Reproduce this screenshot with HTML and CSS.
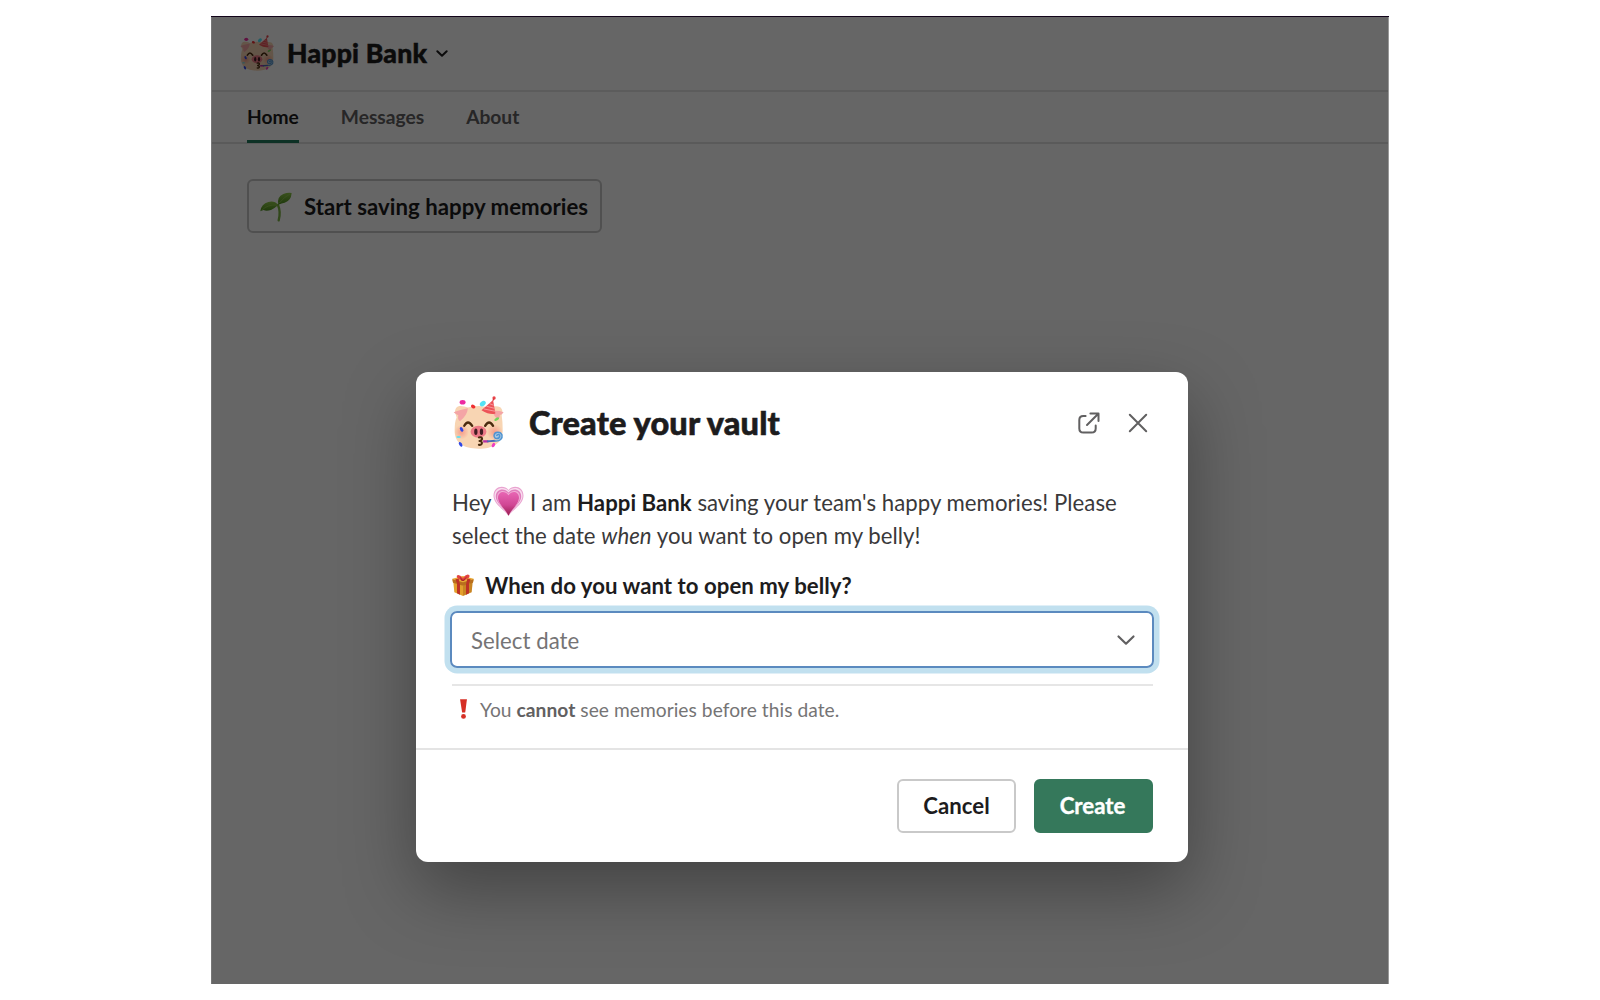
FILE: index.html
```html
<!DOCTYPE html>
<html lang="en">
<head>
<meta charset="utf-8">
<title>Happi Bank</title>
<link rel="stylesheet" href="styles.css">
</head>
<body>
<svg class="defs" width="0" height="0" aria-hidden="true">
  <defs>
    <radialGradient id="cheek"><stop offset="0" stop-color="#f58f80" stop-opacity=".8"/><stop offset="1" stop-color="#f58f80" stop-opacity="0"/></radialGradient>
    <linearGradient id="heart" x1="0" y1="0" x2="0" y2="1"><stop offset="0" stop-color="#e866b4"/><stop offset=".55" stop-color="#d04694"/><stop offset="1" stop-color="#981c4e"/></linearGradient>
    <linearGradient id="leaf" x1="0" y1="0" x2="0" y2="1"><stop offset="0" stop-color="#8fc94a"/><stop offset="1" stop-color="#4c8f1e"/></linearGradient>
  </defs>
  <symbol id="pig" viewBox="38 33 152 160">
    <path fill="#f8d5b3" d="M43 82Q43 66 56 63Q70 62 82 68Q114 58 148 68Q166 60 180 67Q190 76 184 92Q187 110 187 134C188 176 158 192 114 192S41 176 42 136Q42 110 48 98Z"/>
    <path fill="#f4a5a6" d="M39 82Q54 76 82 70Q80 92 58 109Q50 105 53 91Q46 88 39 82ZM190 82Q174 76 157 78Q160 96 174 103Q180 98 178 91Q186 88 190 82Z"/>
    <circle cx="63" cy="142" r="22" fill="url(#cheek)"/><circle cx="163" cy="142" r="24" fill="url(#cheek)"/>
    <path fill="none" stroke="#4a2b0f" stroke-width="7" stroke-linecap="round" d="M71 123Q82 103 95 123M134 123Q146 103 158 123"/>
    <ellipse cx="114" cy="141" rx="24" ry="18" fill="#ee7b88"/>
    <ellipse cx="106" cy="141" rx="5" ry="10" fill="#421c22"/><ellipse cx="123" cy="141" rx="5" ry="10" fill="#421c22"/>
    <path fill="none" stroke="#4a2b0f" stroke-width="6" stroke-linecap="round" stroke-linejoin="round" d="M115 158Q125 156 125 163Q124 168 117 169Q126 170 124 177Q121 182 115 180"/>
    <path stroke="#b52fa6" stroke-width="7" d="M128 170H144"/><path stroke="#4b68b4" stroke-width="6" d="M140 170L165 168"/>
    <circle cx="173" cy="154" r="11" fill="#a8c8e4"/>
    <path fill="none" stroke="#4e94d2" stroke-width="4.5" d="M162 168C180 171 187 161 185 151C181 139 162 139 161 152C160 164 177 164 178 154C178 147 169 148 169 154"/>
    <path fill="#ed5358" d="M158 45L165 86Q150 92 123 76Z"/><path stroke="#f9a6a7" stroke-width="2.5" d="M147 56L160 61M138 64L162 70M130 72L164 79"/>
    <circle cx="161" cy="39" r="5" fill="#e94449"/><path d="M158 47L160 40" stroke="#dc363c" stroke-width="4"/>
    <ellipse cx="66" cy="52" rx="9" ry="7" fill="#ed2ba1"/>
    <ellipse cx="98" cy="65" rx="7" ry="5.5" fill="#ef2f32" transform="rotate(25 98 65)"/>
    <ellipse cx="127" cy="56" rx="10" ry="7" fill="#55e3f5" transform="rotate(-40 127 56)"/>
    <ellipse cx="169" cy="103" rx="8" ry="4" fill="#72d55a" transform="rotate(-30 169 103)"/>
    <g fill="#3148e5"><ellipse cx="63" cy="134" rx="4.5" ry="7.5" transform="rotate(-30 63 134)"/><ellipse cx="60" cy="179" rx="4.5" ry="8" transform="rotate(-30 60 179)"/></g>
    <ellipse cx="54" cy="157" rx="7" ry="3" fill="#65def0"/>
    <ellipse cx="159" cy="181" rx="4.5" ry="7" fill="#ed3fc3" transform="rotate(35 159 181)"/>
  </symbol>
</svg>
<main class="app">
  <header class="app-header">
    <svg class="app-logo"><use href="#pig"/></svg>
    <h1 class="app-name">Happi Bank</h1>
    <svg class="app-caret" viewBox="0 0 12 8"><path d="M1.3 1.3L6 5.8L10.7 1.3"/></svg>
  </header>
  <nav class="tabs">
    <a class="tab tab-active">Home</a>
    <a class="tab">Messages</a>
    <a class="tab">About</a>
  </nav>
  <section class="home">
    <button class="start">
      <svg class="sprout" viewBox="0 0 96 90">
        <path fill="none" stroke="#7cb342" stroke-width="7" stroke-linecap="round" d="M54 39Q63 60 56 85"/>
        <path fill="url(#leaf)" d="M1 58Q4 35 25 30Q43 25 55 39Q46 47 33 54Q18 58 11 54Q6 55 1 58Z"/>
        <path fill="url(#leaf)" d="M55 38Q50 14 70 6Q83 1 95 3Q93 27 74 32Q65 34 55 38Z"/>
        <path fill="none" stroke="#9dcc5b" stroke-width="2" d="M6 54Q23 37 52 39M58 33Q71 16 90 6"/>
      </svg>
      <span class="start-text">Start saving happy memories</span>
    </button>
  </section>
  <div class="overlay">
    <section class="dialog" role="dialog">
      <header class="dialog-header">
        <svg class="dialog-logo"><use href="#pig"/></svg>
        <h2 class="dialog-title">Create your vault</h2>
        <svg class="icon-open" viewBox="0 0 22 22"><path d="M7.6 4H5.3Q1.3 4 1.3 8V16.4Q1.3 20.5 5.3 20.5H13.6Q17.7 20.5 17.7 16.4V13.6M9 13L20.5 1.5M12.4 1.5H20.5V9"/></svg>
        <svg class="icon-close" viewBox="0 0 20 20"><path d="M1.8 1.8L18.2 18.2M18.2 1.8L1.8 18.2"/></svg>
      </header>
      <div class="dialog-body">
        <p class="intro"><span class="intro-line"><span class="hey">Hey</span><svg class="heart" viewBox="0 0 94 92"><path fill="#e9a3d0" d="M47 12C61-5 93 0 93 30C93 56 61 72 47 91C33 72 1 56 1 30C1 0 33-5 47 12Z"/><path fill="#f8dcee" d="M47 15C60 0 90 4 90 31C89 54 60 70 47 89C34 70 5 54 4 31C4 4 34 0 47 15Z"/><path fill="#e07fbd" d="M47 20C59 4 86 8 86 33C85 53 59 69 47 90C35 69 9 53 8 33C8 8 35 4 47 20Z"/><path fill="#f0aed6" d="M47 24C59 9 83 13 82 35C81 54 59 69 47 90C35 69 13 54 12 35C11 13 35 9 47 24Z"/><path fill="url(#heart)" d="M47 28C58 12 81 17 79 38C77 56 58 69 47 91C36 69 17 56 15 38C13 17 36 12 47 28Z"/></svg><span class="intro-rest">I am <b>Happi Bank</b> saving your team's happy memories! Please</span></span><span class="intro-line intro-second">select the date <i>when</i> you want to open my belly!</span></p>
        <div class="label">
          <svg class="gift" viewBox="0 0 66 66"><path fill="#e3a02c" d="M4 25L33 34V66L7 55Z"/><path fill="#c98522" d="M62 25L33 34V66L59 55Z"/><path fill="#e8ab35" d="M1 14L33 6L65 14L63 25L33 34L3 25Z"/><path fill="#b96f1d" d="M1 16L33 25L65 16L63 26L33 35L3 26Z"/><path fill="#bd3226" d="M10 16L20 14L24 31V62L15 58V28ZM56 16L46 14L42 31V62L51 58V28Z"/><path fill="#e44540" d="M33 20Q14 15 14 6Q19-3 33 12Q43-3 52 3Q57 12 33 20Z"/><path fill="#a82827" d="M22 7L33 18L46 6L36 21H29Z"/></svg>
          <span class="label-text">When do you want to open my belly?</span>
        </div>
        <div class="select">
          <span class="placeholder">Select date</span>
          <svg class="select-caret" viewBox="0 0 18 11"><path d="M1.5 1.5L9 8.7L16.5 1.5"/></svg>
        </div>
        <div class="note">
          <svg class="bang" viewBox="0 0 20 58"><path fill="#d62f25" d="M0 1H20L15 39H6Z"/><circle cx="10" cy="50.5" r="7" fill="#d62f25"/></svg>
          <span class="note-text">You <b>cannot</b> see memories before this date.</span>
        </div>
      </div>
      <footer class="dialog-footer">
        <button class="btn btn-cancel"><span>Cancel</span></button>
        <button class="btn btn-create"><span>Create</span></button>
      </footer>
    </section>
  </div>
</main>
</body>
</html>
```
FILE: styles.css
```css
* { box-sizing: border-box; }
body { margin: 0; padding: 16px 0 0 211px; height: 1000px; overflow: hidden; background: #fff; font-family: Lato, "Liberation Sans", sans-serif; color: #1d1c1d; font-size: 22.2px; }
h1, h2, p { margin: 0; }
svg { display: block; flex: none; overflow: visible; }
.defs { position: absolute; }
button { font: inherit; color: inherit; background: #fff; margin: 0; }
span, h1, h2, a { white-space: nowrap; }
.app { position: relative; width: 1178px; height: 968px; background: #fff; border-top: 1px solid #12041a; overflow: hidden; }
.app-header { height: 75px; display: flex; align-items: flex-start; border-bottom: 2px solid #e6e6e6; padding-left: 29px; }
.app-logo { width: 34px; height: 36px; margin-top: 18px; }
.app-name { font-size: 26.6px; font-weight: 900; line-height: 36px; letter-spacing: .2px; -webkit-text-stroke: .5px currentColor; margin: 18px 0 0 13px; width: 142px; }
.app-caret { width: 12px; height: 8px; margin: 33px 0 0 7px; }
.app-caret path, .icon-open path, .icon-close path, .select-caret path { fill: none; stroke-linecap: round; stroke-linejoin: round; }
.app-caret path { stroke: #1d1c1d; stroke-width: 2; }
.tabs { height: 52px; display: flex; border-bottom: 2px solid #e2e2e2; padding-left: 36px; }
.tab { height: 51px; font-size: 19.2px; font-weight: 700; line-height: 50px; color: #616061; margin-right: 42px; }
.tab-active { color: #1d1c1d; border-bottom: 3px solid #217a5c; }
.home { padding: 35px 0 0 36px; }
.start { width: 355px; height: 54px; display: flex; align-items: center; padding: 0 0 0 11px; border: 2px solid #c8c8c8; border-radius: 6px; font-weight: 700; letter-spacing: .03px; }
.sprout { width: 32px; height: 30px; margin-top: 2px; }
.start-text { margin-left: 12px; }
.overlay { position: absolute; inset: -1px 0 0; background: rgba(0,0,0,.6); padding: 356px 0 0 204px; border-left: 1px solid #777; border-right: 1px solid #999; }
.dialog { width: 772px; height: 490px; border-radius: 12px; background: #fff; box-shadow: 0 27px 71px rgba(0,0,0,.35); }
.dialog-header { height: 100px; display: flex; align-items: flex-start; padding-left: 37px; }
.dialog-logo { width: 51px; height: 53px; margin-top: 24px; }
.dialog-title { width: 549px; margin: 30px 0 0 25px; font-size: 32.5px; line-height: 42px; font-weight: 900; letter-spacing: .15px; -webkit-text-stroke: .6px currentColor; }
.icon-open { width: 22px; height: 22px; margin-top: 40px; }
.icon-close { width: 20px; height: 20px; margin: 41px 0 0 28px; }
.icon-open path, .icon-close path { stroke: #616061; stroke-width: 2; }
.dialog-body { height: 278px; padding: 14px 34px 0; border-bottom: 2px solid #e4e4e4; }
.intro { padding-left: 2px; height: 83px; color: #3a393a; letter-spacing: .03px; }
.intro b { color: #1d1c1d; }
.intro-line { display: flex; height: 33px; line-height: 33px; white-space: pre; }
.intro-second { display: block; }
.hey { width: 41px; }
.heart { width: 31px; height: 30px; }
.intro-rest { margin-left: 6px; }
.label { display: flex; height: 42px; padding-left: 2px; font-weight: 700; letter-spacing: .03px; }
.gift { width: 22px; height: 22px; margin-top: 5px; }
.label-text { margin-left: 11px; line-height: 33px; }
.select { height: 57px; width: 704px; display: flex; justify-content: space-between; align-items: center; padding: 2px 17px 0 19px; border: 2px solid #5b8abf; border-radius: 7px; box-shadow: 0 0 0 5.5px #c1e0ef; }
.placeholder { color: #757475; line-height: 33px; letter-spacing: .05px; }
.select-caret { width: 18px; height: 11px; }
.select-caret path { stroke: #616061; stroke-width: 2.2; }
.note { display: flex; margin: 16px 0 0 2px; width: 701px; border-top: 2px solid #e6e6e6; color: #757475; font-size: 19.2px; padding-left: 8px; letter-spacing: .04px; }
.note b { color: #616061; }
.bang { width: 7px; height: 20px; margin-top: 13px; }
.note-text { margin-left: 13px; line-height: 48px; }
.dialog-footer { display: flex; justify-content: flex-end; gap: 18px; padding: 29px 35px 0 0; }
.btn { width: 119px; height: 54px; padding: 0 0 2px; border: 2px solid #c9c9c9; border-radius: 6px; font-weight: 700; }
.btn-create { padding-right: 2px; color: #fff; background: #35785b; border-color: #35785b; -webkit-text-stroke: .4px currentColor; }
```
